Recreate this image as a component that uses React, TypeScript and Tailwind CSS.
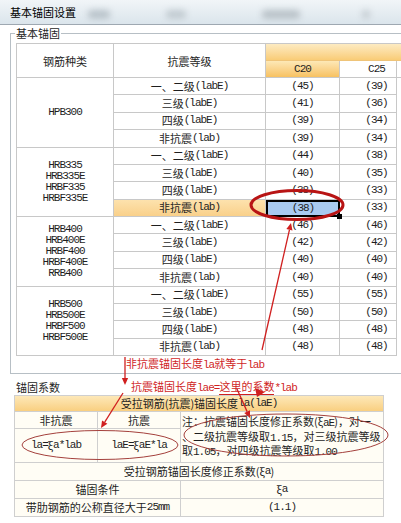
import React from 'react';

const MONO = "font-['Liberation_Mono',monospace] tracking-[-1px]";
const CELL = 'border-r border-b border-[#c8c8c8] flex items-center justify-center';

const grades: [string, string][] = [
  ['一、二级', '(labE)'],
  ['三级', '(labE)'],
  ['四级', '(labE)'],
  ['非抗震', '(lab)'],
];

interface Group {
  names: string[];
  vals: [string, string][];
  sel?: number;
}

const groups: Group[] = [
  { names: ['HPB300'], vals: [['45', '39'], ['41', '36'], ['39', '34'], ['39', '34']] },
  {
    names: ['HRB335', 'HRB335E', 'HRBF335', 'HRBF335E'],
    vals: [['44', '38'], ['40', '35'], ['38', '33'], ['38', '33']],
    sel: 3,
  },
  {
    names: ['HRB400', 'HRB400E', 'HRBF400', 'HRBF400E', 'RRB400'],
    vals: [['46', '46'], ['42', '42'], ['40', '40'], ['40', '40']],
  },
  {
    names: ['HRB500', 'HRB500E', 'HRBF500', 'HRBF500E'],
    vals: [['55', '55'], ['50', '50'], ['48', '48'], ['48', '48']],
  },
];

function Lat({ children }: { children: React.ReactNode }) {
  return <span className={MONO}>{children}</span>;
}

function TitleBar() {
  return (
    <div className="relative h-[25px] border-b border-[#9ea8b1] bg-linear-to-b from-[#f1f5f8] to-[#dbe5ec] flex items-center pl-[10px] text-black">
      {/* blurred background of the glass title bar */}
      <div className="absolute left-[88px] top-[10px] w-[22px] h-[9px] rounded bg-[#b9c3ca] blur-[3px]" />
      <div className="absolute left-[166px] top-[10px] w-[20px] h-[9px] rounded bg-[#c2cbd1] blur-[3px]" />
      <div className="absolute left-[262px] top-[10px] w-[38px] h-[9px] rounded bg-[#b9c2c8] blur-[3px]" />
      <div className="absolute left-[362px] top-[10px] w-[8px] h-[9px] rounded bg-[#c5cdd2] blur-[3px]" />
      <span className="relative">基本锚固设置</span>
    </div>
  );
}

function MainTable() {
  return (
    <div className="w-[404px] border-l border-t border-[#c8c8c8]">
      {/* header */}
      <div className="flex h-[34px]">
        <div className={`w-[97px] ${CELL} pt-[2px]`}>钢筋种类</div>
        <div className={`w-[152px] ${CELL} pt-[2px]`}>抗震等级</div>
        <div className="flex-1 flex flex-col">
          <div className="h-[17px] border-b border-[#efc479] bg-linear-to-b from-[#fdebc2] to-[#f9cc76]" />
          <div className="flex h-[17px]">
            <div className={`w-[74px] ${CELL} bg-linear-to-b from-[#fde8b6] to-[#f7c160]`}>
              <Lat>C20</Lat>
            </div>
            <div className={`w-[57px] ${CELL} pl-[17px]`}>
              <Lat>C25</Lat>
            </div>
            <div className="flex-1 border-b border-[#c8c8c8]" />
          </div>
        </div>
      </div>

      {/* data groups */}
      {groups.map((g) => (
        <div key={g.names[0]} className="flex">
          <div className={`w-[97px] ${CELL} flex-col ${MONO} leading-[11px]`}>
            {g.names.map((n) => (
              <div key={n}>{n}</div>
            ))}
          </div>
          <div className="flex flex-col">
            {g.vals.map((v, i) => {
              const sel = g.sel === i;
              return (
                <div key={i} className="flex h-[17.375px]">
                  <div className={`w-[152px] ${CELL} ${sel ? 'bg-linear-to-b from-[#fde2ad] to-[#f9d08a]' : ''}`}>
                    <span>{grades[i][0]}</span>
                    <Lat>{grades[i][1]}</Lat>
                  </div>
                  {sel ? (
                    <div className="relative w-[74px] border-2 border-black bg-[#a8caf1] flex items-center justify-center">
                      <Lat>({v[0]})</Lat>
                      <div className="absolute -right-[4px] -bottom-[4px] w-[5px] h-[5px] bg-black" />
                    </div>
                  ) : (
                    <div className={`w-[74px] ${CELL}`}>
                      <Lat>({v[0]})</Lat>
                    </div>
                  )}
                  <div className={`w-[57px] ${CELL} pl-[17px]`}>
                    <Lat>({v[1]})</Lat>
                  </div>
                </div>
              );
            })}
          </div>
        </div>
      ))}
    </div>
  );
}

function CoefTable() {
  const c = 'border-r border-b border-[#cfcfcf] flex items-center justify-center';
  return (
    <div className="w-[370px] border-l border-t border-[#cfcfcf] bg-[#fffdf5]">
      <div className={`h-[16px] ${c} bg-linear-to-b from-[#fde8b8] to-[#f9cf80]`}>
        受拉钢筋(抗震)锚固长度<Lat>la(laE)</Lat>
      </div>
      <div className="flex">
        <div className="w-[83px] flex flex-col">
          <div className={`h-[17px] ${c}`}>非抗震</div>
          <div className={`h-[34px] ${c}`}>
            <Lat>la=</Lat>ξ<Lat>a*lab</Lat>
          </div>
        </div>
        <div className="w-[83px] flex flex-col">
          <div className={`h-[17px] ${c}`}>抗震</div>
          <div className={`h-[34px] ${c}`}>
            <Lat>laE=</Lat>ξ<Lat>aE*la</Lat>
          </div>
        </div>
        <div className="w-[203px] h-[51px] border-r border-b border-[#cfcfcf] flex items-center pl-[1px] overflow-hidden whitespace-nowrap">
          <div className="leading-[12.5px]">
            注：抗震锚固长度修正系数(ξ<Lat>aE</Lat>)，对一
            <br />
            、二级抗震等级取<Lat>1.15</Lat>，对三级抗震等级
            <br />
            取<Lat>1.05</Lat>，对四级抗震等级取<Lat>1.00</Lat>
          </div>
        </div>
      </div>
      <div className={`h-[18px] ${c}`}>
        受拉钢筋锚固长度修正系数(ξ<Lat>a</Lat>)
      </div>
      <div className="flex h-[18px]">
        <div className={`w-[166px] ${c}`}>锚固条件</div>
        <div className={`w-[203px] ${c}`}>
          ξ<Lat>a</Lat>
        </div>
      </div>
      <div className="flex h-[18px]">
        <div className={`w-[166px] ${c}`}>
          带肋钢筋的公称直径大于<Lat>25mm</Lat>
        </div>
        <div className={`w-[203px] ${c}`}>
          <Lat>(1.1)</Lat>
        </div>
      </div>
    </div>
  );
}

function Arrow({ x1, y1, x2, y2, color, head = 7 }: { x1: number; y1: number; x2: number; y2: number; color: string; head?: number }) {
  const a = Math.atan2(y2 - y1, x2 - x1);
  const bx = x2 - head * Math.cos(a);
  const by = y2 - head * Math.sin(a);
  const s = head * 0.45;
  const pts = `${x2},${y2} ${bx + s * Math.sin(a)},${by - s * Math.cos(a)} ${bx - s * Math.sin(a)},${by + s * Math.cos(a)}`;
  return (
    <g>
      <line x1={x1} y1={y1} x2={bx} y2={by} stroke={color} strokeWidth={1.3} />
      <polygon points={pts} fill={color} />
    </g>
  );
}

function Annotations() {
  const red = '#d01f1f';
  return (
    <>
      <div className="absolute left-[126px] top-[357px] leading-[13px] text-[#d01f1f] whitespace-nowrap">
        非抗震锚固长度<Lat>la</Lat>就等于<Lat>lab</Lat>
      </div>
      <div className="absolute left-[131px] top-[380px] leading-[13px] text-[#d01f1f] whitespace-nowrap">
        抗震锚固长度<Lat>lae=</Lat>
        <span className="border-b border-[#d01f1f]">这里的系数</span>
        <Lat>*lab</Lat>
      </div>
      <svg className="absolute left-0 top-0 pointer-events-none" width={401} height={523}>
        <ellipse cx={297} cy={205} rx={46} ry={14.5} fill="none" stroke="#b81414" strokeWidth={3} />
        <Arrow x1={262} y1={350} x2={291} y2={223} color={red} />
        <Arrow x1={125} y1={357} x2={125} y2={385} color={red} />
        <Arrow x1={123} y1={393} x2={101} y2={428} color={red} />
        <Arrow x1={237} y1={389} x2={250} y2={418} color={red} />
        <polygon points="255,388 265,392 257,397" fill={red} />
        <ellipse cx={100} cy={445} rx={78} ry={14.5} fill="none" stroke="#a4403c" strokeWidth={1} />
        <ellipse cx={286} cy={435} rx={102} ry={21} fill="none" stroke="#a4403c" strokeWidth={1} />
      </svg>
    </>
  );
}

export default function App() {
  return (
    <div className="relative w-[401px] h-[523px] overflow-hidden bg-white text-[#1e1e1e] text-[11px] leading-[13px] font-['Noto_Sans_CJK_SC',sans-serif]">
      <TitleBar />

      {/* 基本锚固 group */}
      <div className="relative mt-[8px] ml-[10px] w-[420px] border border-[#b7bfc5] pl-[5px] pt-[9px] pb-[17px]">
        <span className="absolute -top-[7px] left-[4px] bg-white px-px">基本锚固</span>
        <MainTable />
      </div>

      {/* 锚固系数 */}
      <div className="ml-[16px] mt-[7px] h-[13px]">锚固系数</div>
      <div className="ml-[14px] mt-[1px]">
        <CoefTable />
      </div>

      <Annotations />
    </div>
  );
}
